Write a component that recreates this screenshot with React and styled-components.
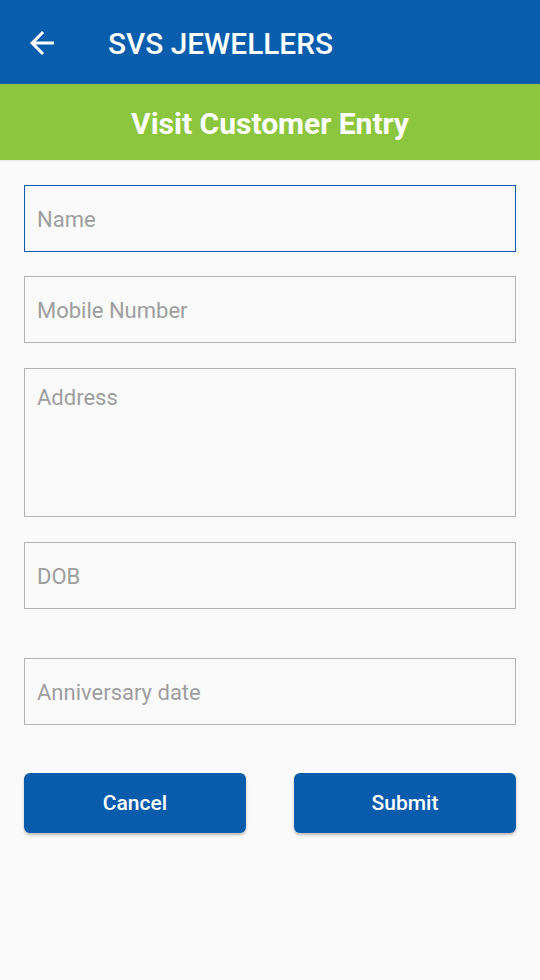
import React from "react";
import styled, { createGlobalStyle } from "styled-components";

const Global = createGlobalStyle`
  html, body { margin: 0; padding: 0; background: #fafafa; }
  body { font-family: Roboto, "Noto Sans", sans-serif; }
  * { box-sizing: border-box; }
`;

const Page = styled.div`
  width: 540px;
  min-height: 980px;
  background: #fafafa;
  display: flex;
  flex-direction: column;
`;

const AppBar = styled.header`
  height: 84px;
  background: #095dad;
  display: flex;
  align-items: center;
  padding-left: 24px;
  padding-top: 2px;
  gap: 48px;
  color: #fff;
`;

const BackButton = styled.button`
  width: 36px;
  height: 36px;
  padding: 0;
  border: 0;
  background: transparent;
  color: #fff;
  display: flex;
`;

const Title = styled.h1`
  margin: 0;
  font-size: 29.8px;
  font-weight: 500;
  letter-spacing: 0;
`;

const Banner = styled.div`
  height: 76px;
  background: #8cc63e;
  display: flex;
  align-items: center;
  justify-content: center;
  color: #fff;
  font-size: 30px;
  font-weight: 700;
  padding-top: 2px;
  box-shadow: 0 1px 2px rgba(0,0,0,0.08);
`;

const Form = styled.form`
  display: flex;
  flex-direction: column;
  padding: 25px 24px 0;
`;

const fieldBase = `
  width: 100%;
  border: 1px solid #b3b3b3;
  background: #fafafa;
  font-family: Roboto, "Noto Sans", sans-serif;
  font-size: 22px;
  color: #333;
  padding: 0 12px;
  outline: none;
  &::placeholder { color: #9e9e9e; }
`;

const Input = styled.input`
  ${fieldBase}
  height: 67px;
  padding-top: 2px;
  margin-top: ${(p) => p.$gap || 0}px;
  border: ${(p) => (p.$focused ? "1.5px solid #0a5dad" : "1px solid #b3b3b3")};
`;

const TextArea = styled.textarea`
  ${fieldBase}
  height: 149px;
  margin-top: ${(p) => p.$gap || 0}px;
  padding-top: 16px;
  resize: none;
  display: block;
`;

const Actions = styled.div`
  display: grid;
  grid-template-columns: 1fr 1fr;
  gap: 48px;
  margin-top: 48px;
`;

const Button = styled.button`
  height: 60px;
  border: 0;
  border-radius: 6px;
  background: #095cac;
  color: #fff;
  font-family: Roboto, "Noto Sans", sans-serif;
  font-size: 21px;
  font-weight: 500;
  box-shadow: 0 2px 3px rgba(0, 0, 0, 0.25);
`;

const BackIcon = () => (
  <svg width="36" height="36" viewBox="0 0 24 24" fill="currentColor">
    <path d="M20 11H7.83l5.59-5.59L12 4l-8 8 8 8 1.41-1.41L7.83 13H20v-2z" />
  </svg>
);

export default function App() {
  return (
    <Page>
      <Global />
      <AppBar>
        <BackButton aria-label="Back">
          <BackIcon />
        </BackButton>
        <Title>SVS JEWELLERS</Title>
      </AppBar>
      <Banner>Visit Customer Entry</Banner>
      <Form onSubmit={(e) => e.preventDefault()}>
        <Input placeholder="Name" $focused />
        <Input placeholder="Mobile Number" $gap={24} />
        <TextArea placeholder="Address" $gap={25} />
        <Input placeholder="DOB" $gap={25} />
        <Input placeholder="Anniversary date" $gap={49} />
        <Actions>
          <Button type="button">Cancel</Button>
          <Button type="submit">Submit</Button>
        </Actions>
      </Form>
    </Page>
  );
}
